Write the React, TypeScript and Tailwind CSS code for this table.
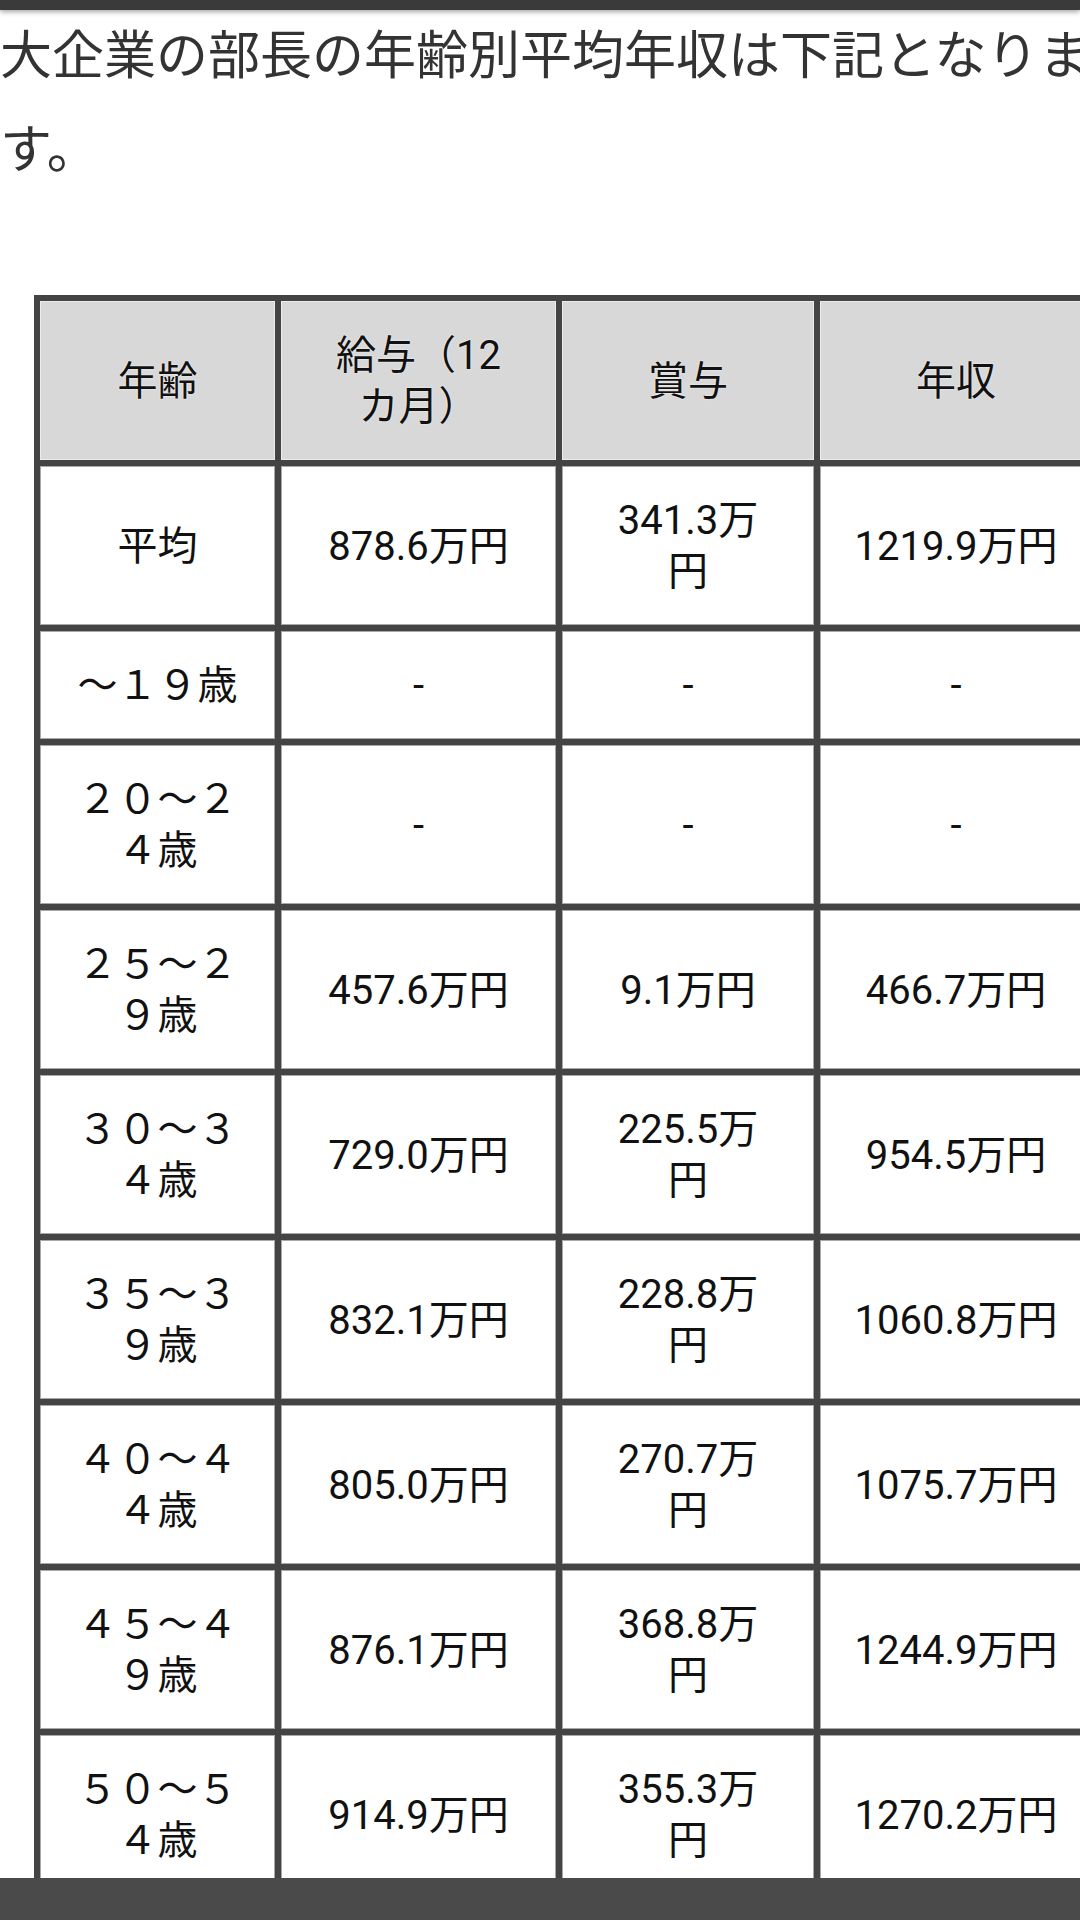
import React from "react";

const rows: string[][] = [
  ["平均", "878.6万円", "341.3万円", "1219.9万円"],
  ["～１９歳", "-", "-", "-"],
  ["２０～２４歳", "-", "-", "-"],
  ["２５～２９歳", "457.6万円", "9.1万円", "466.7万円"],
  ["３０～３４歳", "729.0万円", "225.5万円", "954.5万円"],
  ["３５～３９歳", "832.1万円", "228.8万円", "1060.8万円"],
  ["４０～４４歳", "805.0万円", "270.7万円", "1075.7万円"],
  ["４５～４９歳", "876.1万円", "368.8万円", "1244.9万円"],
  ["５０～５４歳", "914.9万円", "355.3万円", "1270.2万円"],
];

const header = ["年齢", "給与（12カ月）", "賞与", "年収"];

// inner widths decide where the cell text wraps
const colWidth = ["max-w-[180px]", "max-w-[185px]", "max-w-[160px]", "max-w-[240px]"];

function Cell({ text, col, head }: { text: string; col: number; head?: boolean }) {
  return (
    <div
      className={
        head
          ? "flex items-center justify-center border border-[#ececec] bg-[#d8d8d8] pt-[28px] pb-[27px] text-center [text-shadow:0_0_2px_#fff]"
          : "flex items-center justify-center border border-[#a8a8a8] bg-white pt-[28px] pb-[27px] text-center"
      }
    >
      <div className={"mx-auto " + colWidth[col]}>{text}</div>
    </div>
  );
}

export default function App() {
  return (
    <div className="relative h-[1920px] w-[1080px] overflow-hidden bg-white">
      <div className="absolute left-0 right-0 top-0 z-10 h-[10px] bg-[#3a3a3a] shadow-[0_2px_5px_rgba(0,0,0,0.35)]" />

      <p className="w-[1110px] pt-[5px] text-[52px] leading-[94px] text-[#333] [font-family:'Noto_Sans_CJK_JP',sans-serif]">
        大企業の部長の年齢別平均年収は下記となります。
      </p>

      <div className="ml-[34px] mt-[102px] grid w-max grid-cols-[235px_275px_252px_272px] gap-[6px] bg-[#444] p-[6px] text-[40px] leading-[51px] text-[#111] [font-family:Roboto,'Noto_Sans_CJK_JP',sans-serif]">
        {header.map((h, i) => (
          <Cell key={h} text={h} col={i} head />
        ))}
        {rows.map((r, ri) =>
          r.map((c, ci) => <Cell key={ri + "-" + ci} text={c} col={ci} />)
        )}
      </div>

      <div className="absolute bottom-0 left-0 right-0 h-[42px] bg-[#4a4a4a]" />
    </div>
  );
}
